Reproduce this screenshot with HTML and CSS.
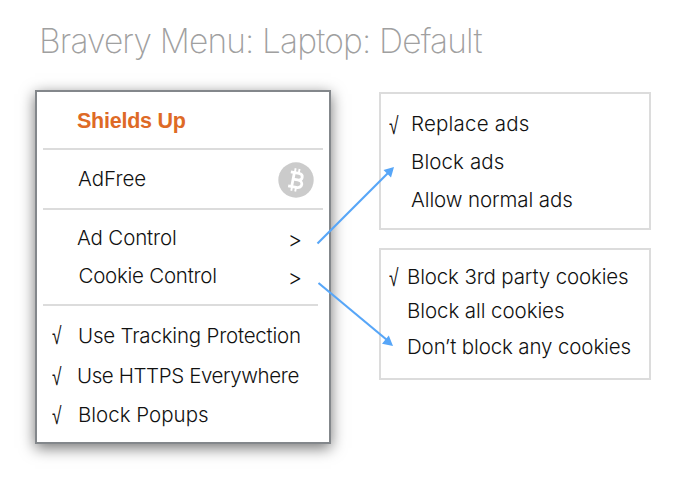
FILE: index.html
```html
<!DOCTYPE html>
<html lang="en">
<head>
<meta charset="utf-8">
<title>Bravery Menu</title>
<link rel="stylesheet" href="styles.css">
</head>
<body>
<h1 class="title">Bravery Menu: Laptop: Default</h1>
<main class="board">
  <section class="menu">
    <div class="row shields"><span class="label">Shields Up</span></div>
    <hr class="rule">
    <div class="row adfree"><span class="label t-adfree">AdFree</span>
      <svg class="coin" viewBox="0 0 36 36"><circle cx="18" cy="18" r="17.7" fill="#cbcbcb"/><g transform="rotate(11 18 18)" fill="none" stroke="#fff" stroke-width="2.8"><path d="M11.400 11h8.200c5.300 0 5.300 6.600 0 6.600h-4.600M11.400 25.200h8.200c6.600 0 6.600-7.600 0-7.600M15 11v14"/><path stroke-width="1.9" d="M15.400 6.500v4M19.400 6.500v4M15.400 25.500v4M19.400 25.500v4"/></g></svg>
    </div>
    <hr class="rule">
    <div class="group controls">
      <div class="row"><span class="label t-adcontrol">Ad Control</span><span class="more">&gt;</span></div>
      <div class="row"><span class="label t-cookie">Cookie Control</span><span class="more">&gt;</span></div>
    </div>
    <hr class="rule short">
    <div class="group options">
      <div class="row"><span class="check high">√</span><span class="label t-tracking">Use Tracking Protection</span></div>
      <div class="row"><span class="check">√</span><span class="label t-https">Use HTTPS Everywhere</span></div>
      <div class="row last"><span class="check">√</span><span class="label t-popups">Block Popups</span></div>
    </div>
  </section>
  <div class="submenus">
    <section class="submenu ads">
      <div class="row"><span class="check">√</span><span class="label t-replace">Replace ads</span></div>
      <div class="row"><span class="label t-block">Block ads</span></div>
      <div class="row"><span class="label t-allow">Allow normal ads</span></div>
    </section>
    <section class="submenu cookies">
      <div class="row"><span class="check">√</span><span class="label t-third">Block 3rd party cookies</span></div>
      <div class="row mid"><span class="label t-all">Block all cookies</span></div>
      <div class="row end"><span class="label t-any">Don’t block any cookies</span></div>
    </section>
  </div>
</main>
<svg class="arrows" viewBox="0 0 695 497"><g stroke="#57a6f8" stroke-width="2.2"><path d="M317.500 243.500 388 173"/><path d="M318.500 283 387 340"/></g><g fill="#57a6f8"><path d="M394 167 391 177.500 383.500 170z"/><path d="M393 346 382 343.700 388.800 335.500z"/></g></svg>
</body>
</html>
```
FILE: styles.css
```css
* { box-sizing: border-box; }
body {
  margin: 0;
  width: 695px;
  height: 497px;
  overflow: hidden;
  background: #fff;
  color: #111;
  font: 300 20.5px/38px Inter, "Liberation Sans", sans-serif;
  white-space: nowrap;
}
.title {
  margin: 0;
  height: 90px;
  padding: 21px 0 0 39px;
  color: #a0a0a0;
  font-size: 33.5px;
  font-weight: 200;
  line-height: 40px;
  letter-spacing: -.83px;
}
.board { display: flex; align-items: flex-start; padding-left: 35px; }
.menu {
  width: 296px;
  height: 354px;
  border: 2px solid #83878b;
  background: #fff;
  box-shadow: 0 4px 14px rgba(0, 0, 0, .55);
}
.row { display: flex; align-items: center; height: 38px; padding-left: 40px; }
.shields { height: 56px; padding-top: 2px; color: #de6a26; font-family: "Liberation Sans", sans-serif; font-size: 21.5px; font-weight: 700; }
.adfree { height: 58px; }
.coin { width: 36px; height: 36px; margin: 1px 15.5px 0 auto; }
.rule { width: 280px; height: 2px; margin: 0 0 0 6px; border: 0; background: #dcdcdc; }
.short { width: 275px; }
.controls { padding: 9px 0; }
.more { margin-left: auto; margin-right: 27px; padding-top: 1px; font: 300 22px/38px Inter, sans-serif; }
.options { padding-top: 10px; }
.options .row { height: 40px; padding-left: 0; }
.options .last { height: 38px; }
.check {
  width: 25px;
  margin-left: 15px;
  padding-top: 2px;
  transform: scaleX(.72);
  transform-origin: left;
  font: 300 24px/38px "Liberation Sans", sans-serif;
}
.high { margin-top: -3px; }
.submenus { display: flex; flex-direction: column; gap: 18px; padding: 2px 0 0 48px; }
.submenu { width: 272px; border: 2px solid #dcdcdc; }
.ads { height: 138px; padding-top: 11px; }
.cookies { height: 132px; padding-top: 9px; }
.submenu .row { padding-left: 30px; }
.submenu .check { width: 22px; margin: 2px 0 0 -22px; }
.cookies .row { height: 36px; padding-left: 26px; }
.cookies .check { width: 18px; margin: 0 0 0 -18px; }
.cookies .mid { height: 32px; }
.cookies .end { height: 40px; }
.arrows { position: absolute; left: 0; top: 0; width: 695px; height: 497px; pointer-events: none; }
.label { letter-spacing: -.4px; }
.shields .label { letter-spacing: -.25px; }
.t-adfree { padding-left: 1px; letter-spacing: 0; }
.t-adcontrol { letter-spacing: -.15px; }
.t-cookie { padding-left: 1.5px; letter-spacing: -.25px; }
.t-tracking { padding-left: 1px; letter-spacing: -.2px; }
.t-popups { padding-left: 1px; letter-spacing: 0; }
.t-replace { letter-spacing: .2px; }
.t-block { letter-spacing: .1px; }
.t-allow { letter-spacing: -.1px; }
.t-third { letter-spacing: -.15px; }
.t-all { letter-spacing: -.08px; }
.t-any { letter-spacing: -.13px; }
```
